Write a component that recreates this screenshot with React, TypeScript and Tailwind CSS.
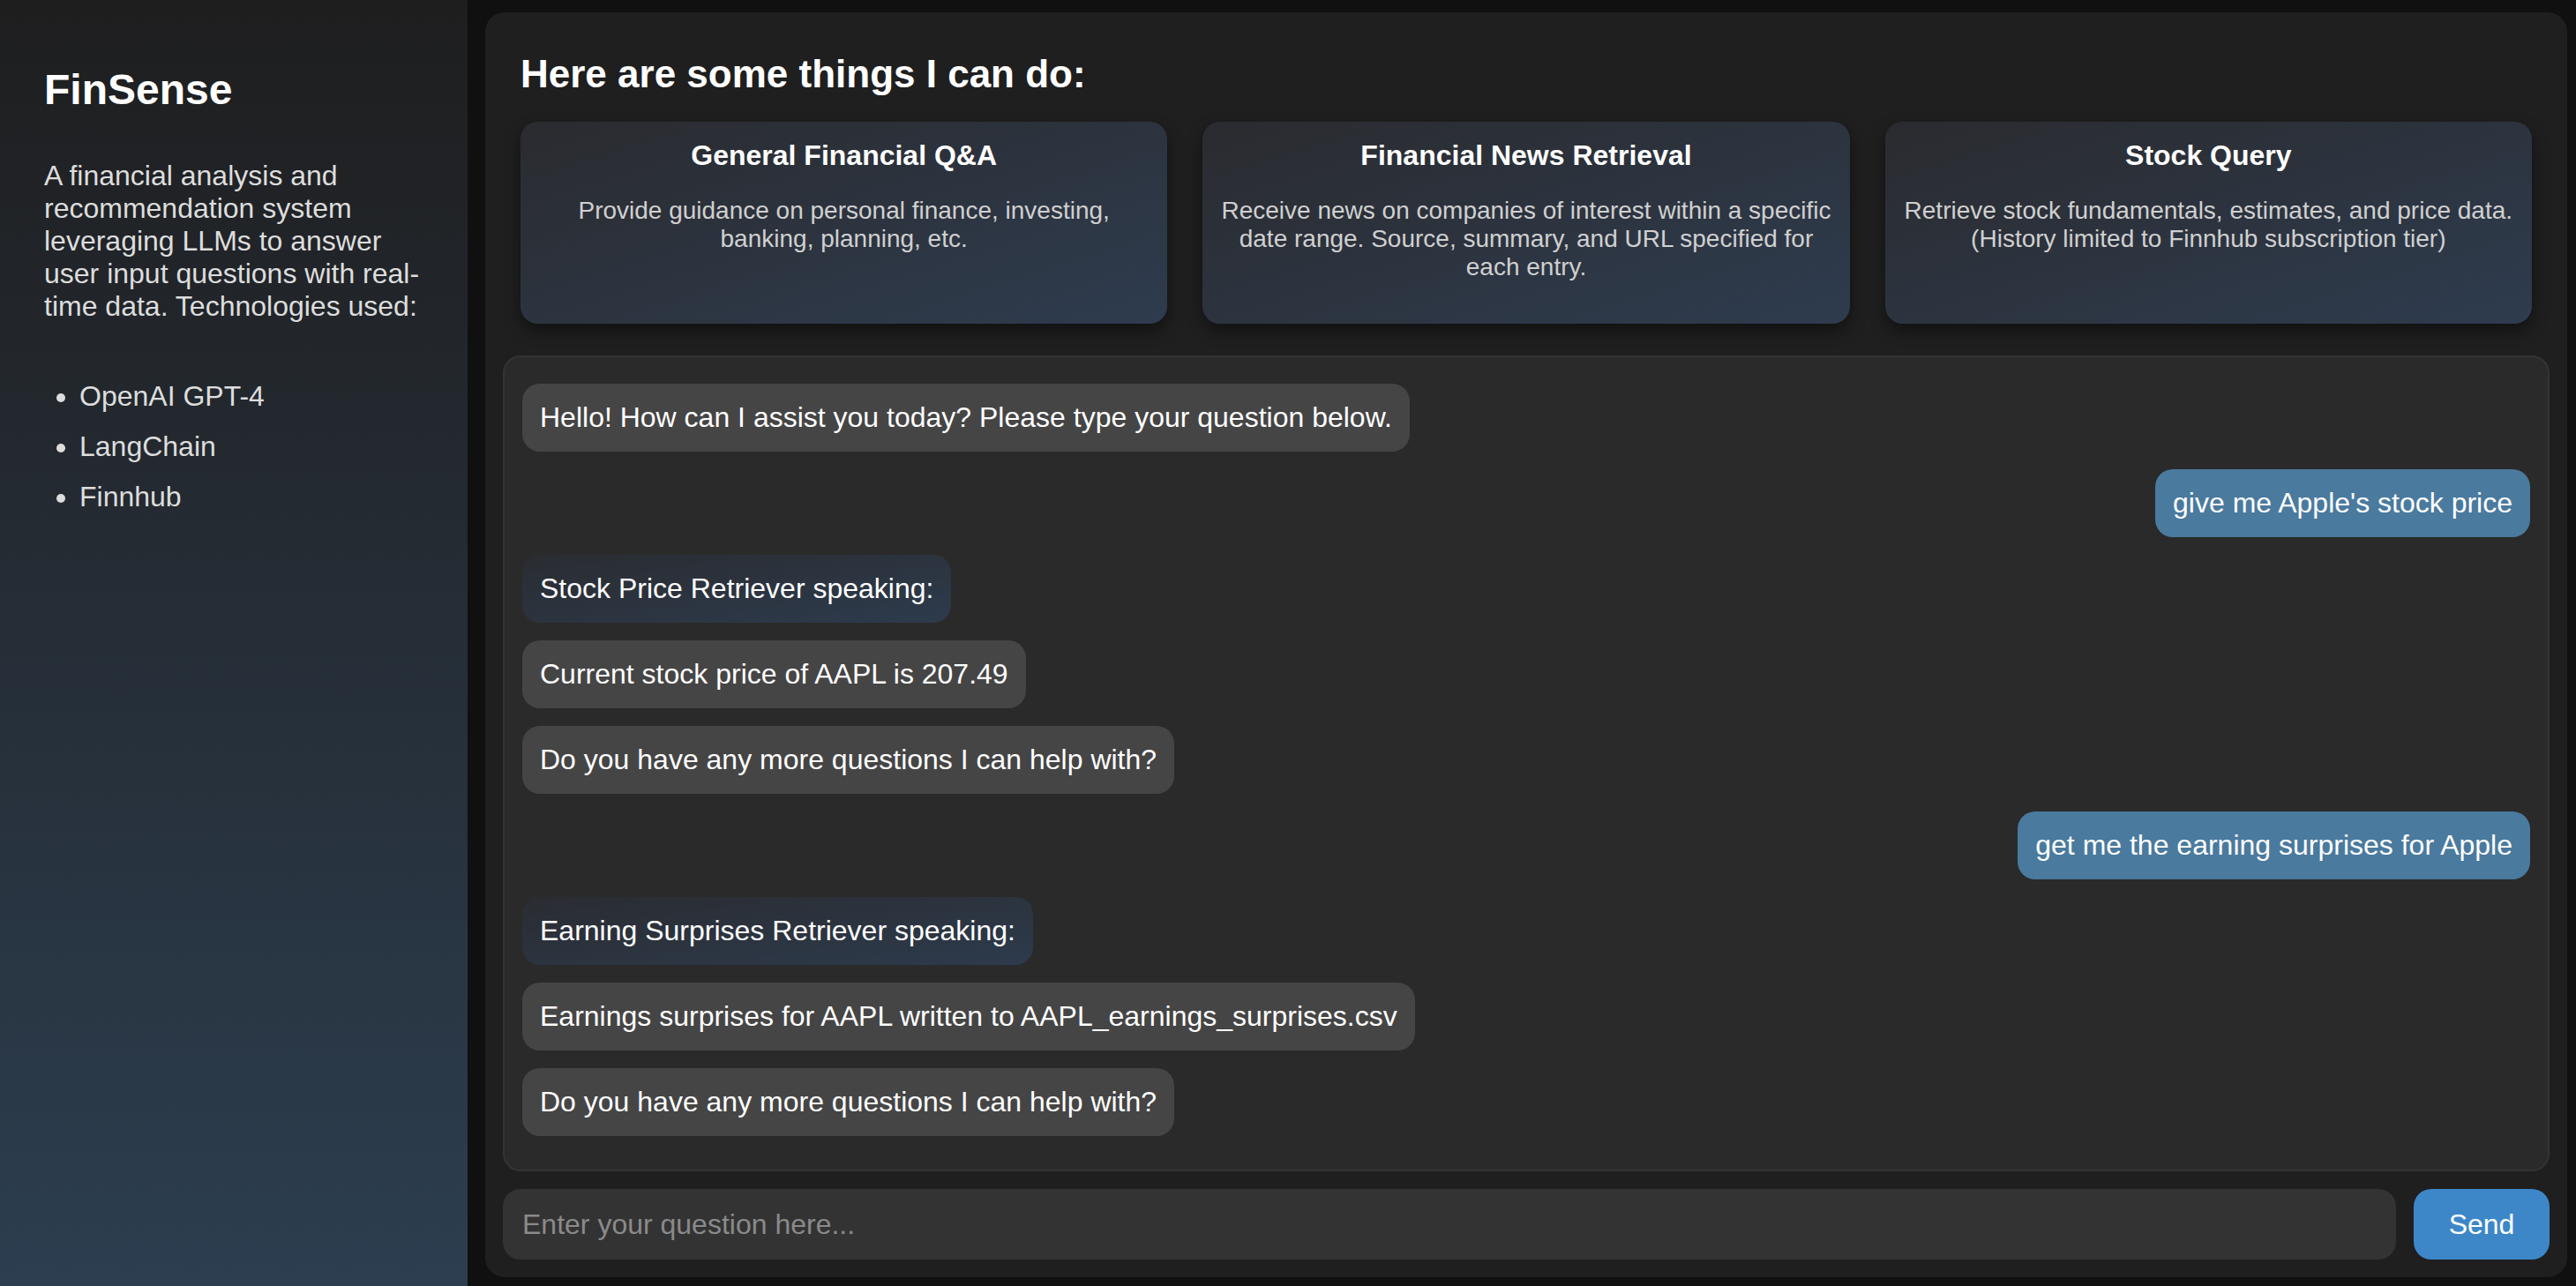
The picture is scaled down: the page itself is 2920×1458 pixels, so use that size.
const features = [
  {
    title: 'General Financial Q&A',
    text: 'Provide guidance on personal finance, investing, banking, planning, etc.',
  },
  {
    title: 'Financial News Retrieval',
    text: 'Receive news on companies of interest within a specific date range. Source, summary, and URL specified for each entry.',
  },
  {
    title: 'Stock Query',
    text: 'Retrieve stock fundamentals, estimates, and price data. (History limited to Finnhub subscription tier)',
  },
];

type Msg = { from: 'bot' | 'user' | 'agent'; text: string };

const messages: Msg[] = [
  { from: 'bot', text: 'Hello! How can I assist you today? Please type your question below.' },
  { from: 'user', text: "give me Apple's stock price" },
  { from: 'agent', text: 'Stock Price Retriever speaking:' },
  { from: 'bot', text: 'Current stock price of AAPL is 207.49' },
  { from: 'bot', text: 'Do you have any more questions I can help with?' },
  { from: 'user', text: 'get me the earning surprises for Apple' },
  { from: 'agent', text: 'Earning Surprises Retriever speaking:' },
  { from: 'bot', text: 'Earnings surprises for AAPL written to AAPL_earnings_surprises.csv' },
  { from: 'bot', text: 'Do you have any more questions I can help with?' },
];

function Bubble({ msg }: { msg: Msg }) {
  const base = 'my-[10px] px-[20px] py-[20px] rounded-[20px] text-[32px] leading-[37px] text-white max-w-[70%]';
  if (msg.from === 'user') {
    return <div className={`${base} self-end bg-[#4a7a9e]`}>{msg.text}</div>;
  }
  if (msg.from === 'agent') {
    return (
      <div className={`${base} self-start bg-linear-to-br from-[#2a2c31] to-[#2d3b4d]`}>{msg.text}</div>
    );
  }
  return <div className={`${base} self-start bg-[#454545]`}>{msg.text}</div>;
}

export default function App() {
  return (
    <div className="flex h-screen w-full bg-[#101010] font-['Liberation_Sans',Arial,sans-serif] overflow-hidden">
      {/* sidebar */}
      <aside className="w-[530px] shrink-0 h-full bg-linear-to-b from-[#1e1e1f] to-[#2c3e50] px-[50px] pt-[74px]">
        <h1 className="text-[48px] font-bold text-white leading-[55px]">FinSense</h1>
        <p className="mt-[52px] text-[32px] leading-[37px] text-[#dddddd]">
          A financial analysis and recommendation system leveraging LLMs to answer user input questions with
          real-time data. Technologies used:
        </p>
        <ul className="mt-[65px] list-disc pl-[40px] text-[32px] leading-[37px] text-[#dddddd] space-y-[20px]">
          <li>OpenAI GPT-4</li>
          <li>LangChain</li>
          <li>Finnhub</li>
        </ul>
      </aside>

      {/* main */}
      <div className="flex-1 min-w-0 pl-[20px] pt-[14px] pr-[10px] pb-[10px]">
        <main className="h-full rounded-[22px] bg-[#1f1f1f] p-[20px] flex flex-col">
          <section className="px-[20px] pt-[24px] pb-[36px]">
            <h2 className="text-[44px] font-bold text-white leading-[51px]">Here are some things I can do:</h2>
            <div className="mt-[29px] grid grid-cols-3 gap-[40px]">
              {features.map((f) => (
                <div
                  key={f.title}
                  className="h-[229px] rounded-[20px] bg-linear-to-br from-[#2a2b2f] to-[#2e3c4f] px-[18px] pt-[20px] text-center shadow-[0_8px_18px_rgba(0,0,0,0.45)]"
                >
                  <h3 className="text-[32px] font-bold text-white leading-[37px]">{f.title}</h3>
                  <p className="mt-[28px] text-[28px] leading-[32px] text-[#d0d0d0]">{f.text}</p>
                </div>
              ))}
            </div>
          </section>

          <div className="flex-1 min-h-0 rounded-[20px] border-2 border-[#333333] bg-[#2a2a2a] px-[20px] py-[20px] flex flex-col overflow-y-auto">
            {messages.map((m, i) => (
              <Bubble key={i} msg={m} />
            ))}
          </div>

          <div className="mt-[20px] flex gap-[20px] h-[80px]">
            <input
              className="flex-1 min-w-0 rounded-[20px] bg-[#333333] px-[22px] text-[32px] text-white placeholder:text-[#8a8a8a] outline-none"
              placeholder="Enter your question here..."
            />
            <button className="w-[154px] rounded-[20px] bg-[#3d87c9] text-[32px] text-white">Send</button>
          </div>
        </main>
      </div>
    </div>
  );
}
